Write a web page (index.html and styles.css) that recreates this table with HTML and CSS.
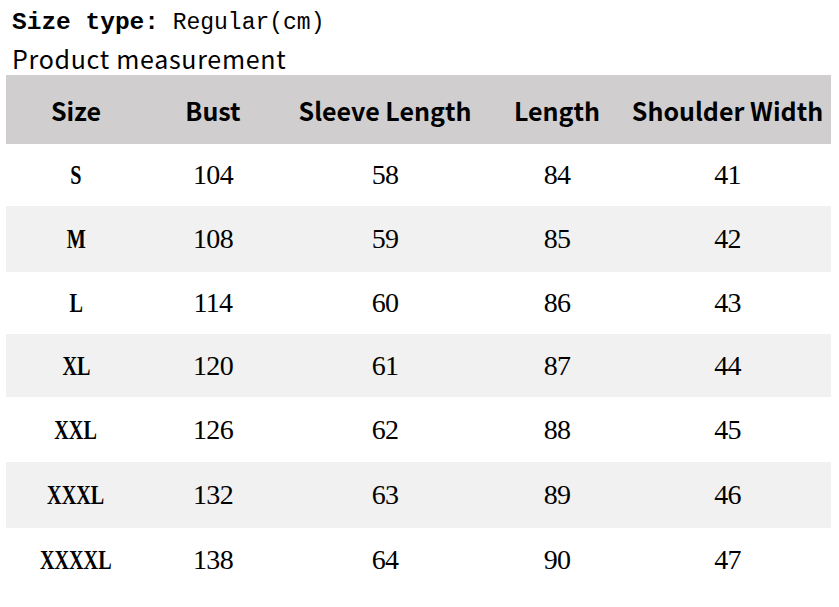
FILE: index.html
```html
<!DOCTYPE html>
<html>
<head>
<meta charset="utf-8">
<link rel="stylesheet" href="styles.css">
</head>
<body>
<div class="page">
  <div class="type-line"><span class="type-label">Size type:</span> <span class="type-value">Regular(cm)</span></div>
  <div class="subtitle">Product measurement</div>
  <table class="chart">
    <colgroup>
      <col class="c1"><col class="c2"><col class="c3"><col class="c4"><col class="c5">
    </colgroup>
    <thead>
      <tr><th>Size</th><th>Bust</th><th>Sleeve Length</th><th>Length</th><th>Shoulder Width</th></tr>
    </thead>
    <tbody>
      <tr><td><span class="sz">S</span></td><td>104</td><td>58</td><td>84</td><td>41</td></tr>
      <tr class="alt"><td><span class="sz">M</span></td><td>108</td><td>59</td><td>85</td><td>42</td></tr>
      <tr><td><span class="sz">L</span></td><td>114</td><td>60</td><td>86</td><td>43</td></tr>
      <tr class="alt"><td><span class="sz">XL</span></td><td>120</td><td>61</td><td>87</td><td>44</td></tr>
      <tr><td><span class="sz">XXL</span></td><td>126</td><td>62</td><td>88</td><td>45</td></tr>
      <tr class="alt"><td><span class="sz">XXXL</span></td><td>132</td><td>63</td><td>89</td><td>46</td></tr>
      <tr><td><span class="sz">XXXXL</span></td><td>138</td><td>64</td><td>90</td><td>47</td></tr>
    </tbody>
  </table>
</div>
</body>
</html>
```
FILE: styles.css
```css
html, body {
  margin: 0;
  padding: 0;
  background: #ffffff;
  color: #000000;
}
.page {
  padding: 5px 0 0 6px;
  width: 825px;
}
.type-line {
  font-family: "Liberation Mono", monospace;
  height: 36px;
  line-height: 36px;
  padding-left: 6px;
  white-space: nowrap;
}
.type-label {
  font-weight: 700;
  font-size: 24.5px;
}
.type-value {
  font-size: 23px;
  margin-left: 4px;
}
.subtitle {
  font-family: "Noto Sans CJK SC", "Noto Sans", sans-serif;
  font-size: 25px;
  letter-spacing: 0.7px;
  height: 34px;
  line-height: 34px;
  padding-left: 6px;
}
.chart {
  border-collapse: collapse;
  table-layout: fixed;
  width: 825px;
}
.c1 { width: 140px; }
.c2 { width: 134px; }
.c3 { width: 210px; }
.c4 { width: 134px; }
.c5 { width: 207px; }
.chart th {
  background: #d0cecf;
  height: 69px;
  padding: 0;
  font-family: "Noto Sans CJK SC", "Noto Sans", sans-serif;
  font-weight: 700;
  font-size: 25px;
  text-align: center;
  white-space: nowrap;
}
.chart td {
  height: 64px;
  padding: 0;
  text-align: center;
  font-family: "Liberation Serif", "Times New Roman", serif;
  font-size: 28px;
  letter-spacing: -0.7px;
}
.chart tbody tr:nth-child(1) td { height: 62px; }
.chart tbody tr:nth-child(2) td { height: 66px; }
.chart tbody tr:nth-child(3) td { height: 62px; }
.chart tbody tr:nth-child(4) td { height: 63px; }
.chart tbody tr:nth-child(5) td { height: 65px; }
.chart tbody tr:nth-child(6) td { height: 66px; }
.chart tbody tr:nth-child(7) td { height: 64px; }
.chart .sz {
  display: inline-block;
  font-weight: 700;
  letter-spacing: 0;
  transform: scaleX(0.72);
}
.chart tr.alt td {
  background: #f1f1f1;
}
```
